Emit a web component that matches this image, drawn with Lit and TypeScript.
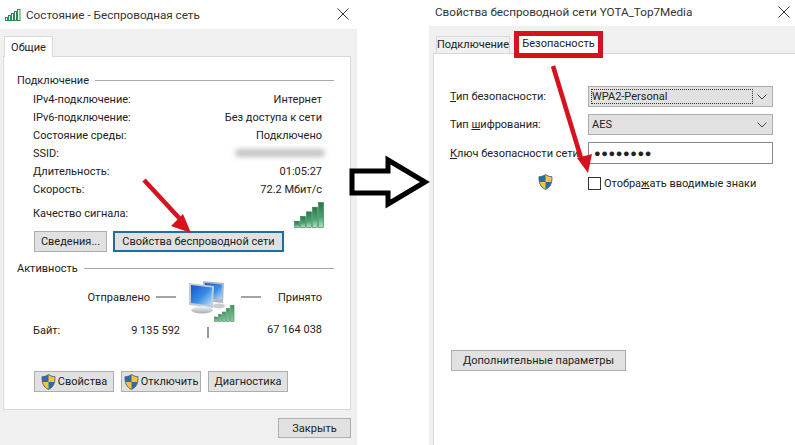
import { LitElement, html, css, svg } from "lit";
import { customElement } from "lit/decorators.js";

const closeIcon = html`<svg class="close" width="12" height="12" viewBox="0 0 12 12"><path d="M.5.5l11 11M11.5.5l-11 11" stroke="#333" fill="none"/></svg>`;

let shieldId = 0;
const shield = (size = 15) => {
  const id = `sh${shieldId++}`;
  return html`<svg class="shield" width=${size} height=${size + 1} viewBox="0 0 15 16">
    <defs><clipPath id=${id}><path d="M7.5.5C9.5 2 11.5 2.6 14 2.7c.3 6-1.5 10.5-6.5 12.8C2.5 13.2.7 8.7 1 2.7 3.5 2.6 5.5 2 7.5.5z"/></clipPath></defs>
    <g clip-path="url(#${id})">
      <rect width="15" height="16" fill="#2f6aa8"/>
      <rect x="7.5" width="8" height="8" fill="#f2c53d"/>
      <rect y="8" width="7.5" height="8" fill="#f2c53d"/>
    </g>
    <path d="M7.5.5C9.5 2 11.5 2.6 14 2.7c.3 6-1.5 10.5-6.5 12.8C2.5 13.2.7 8.7 1 2.7 3.5 2.6 5.5 2 7.5.5z" fill="none" stroke="#3f5f7f" stroke-width=".8"/>
  </svg>`;
};

// five rising bars, dark at the top and mint at the foot
const bars = (w: number, h: number, id: string) => {
  const step = w / 5;
  return html`<svg class="bars" width=${w} height=${h} viewBox="0 0 ${w} ${h}">
    <defs><linearGradient id=${id} x1="0" y1="0" x2="0" y2="1">
      <stop offset="0" stop-color="#27784a"/><stop offset=".6" stop-color="#4aa570"/><stop offset="1" stop-color="#b4e2c8"/>
    </linearGradient></defs>
    ${[0, 1, 2, 3, 4].map((i) => {
      const bh = h * (0.28 + i * 0.18);
      return svg`<rect x=${i * step + 0.5} y=${h - bh + 0.5} width=${step - 1} height=${bh - 1} fill="url(#${id})" stroke="#2c7a4c" stroke-width=".6"/>`;
    })}
  </svg>`;
};

const titleBars = html`<svg width="16" height="12" viewBox="0 0 16 12" fill="#fff" stroke="#2c8a50">
  <rect x=".5" y="8.5" width="2" height="3"/><rect x="3.5" y="6.5" width="2" height="5"/><rect x="6.5" y="4.5" width="2" height="7"/><rect x="9.5" y="2.5" width="2" height="9"/><rect x="12.5" y=".5" width="2.5" height="11"/>
</svg>`;

const computers = html`<svg class="pc" width="48" height="42" viewBox="0 0 48 42">
  <defs>
    <linearGradient id="scr" x1="0" y1="0" x2="1" y2="1"><stop offset="0" stop-color="#0f56c8"/><stop offset=".55" stop-color="#3a8fe8"/><stop offset="1" stop-color="#bfe0f8"/></linearGradient>
    <linearGradient id="stand" x1="0" y1="0" x2="0" y2="1"><stop offset="0" stop-color="#f2f2f2"/><stop offset="1" stop-color="#a8aeb0"/></linearGradient>
    <linearGradient id="mini" x1="0" y1="0" x2="0" y2="1"><stop offset="0" stop-color="#3d9a60"/><stop offset="1" stop-color="#8fcba6"/></linearGradient>
  </defs>
  <path d="M15 1l21 2-1 20-20-2z" fill="#aeb9c6"/>
  <path d="M17 3l17 1.5-.5 15-16.5-1.5z" fill="url(#scr)"/>
  <ellipse cx="31" cy="26" rx="6" ry="2.5" fill="#c8cdd0"/>
  <path d="M1 3l25 3-1 22-24-3z" fill="#c3ccd6"/>
  <path d="M3 5l21 2.5-1 18-20-2.5z" fill="url(#scr)"/>
  <path d="M10 26h9v3h-9z" fill="url(#stand)"/>
  <ellipse cx="14" cy="30" rx="11" ry="3.5" fill="url(#stand)"/>
  <g transform="translate(26 25)" fill="url(#mini)" stroke="#2c7a46" stroke-width=".5">
    <rect x=".5" y="12" width="3" height="4.5"/><rect x="4.5" y="9.5" width="3" height="7"/><rect x="8.5" y="7" width="3" height="9.5"/><rect x="12.5" y="3.5" width="3" height="13"/><rect x="16.5" y=".5" width="3.5" height="16"/>
  </g>
</svg>`;

const chevron = html`<svg class="chev" width="10" height="6" viewBox="0 0 10 6"><path d="M.5.5l4.5 4.5 4.5-4.5" stroke="#444" fill="none"/></svg>`;

@customElement("status-window")
class StatusWindow extends LitElement {
  static styles = css`
    :host { display: flex; flex-direction: column; width: 357px; height: 445px; flex: none; }
    .title { height: 29px; display: flex; align-items: center; gap: 5px; padding: 0 8px 0 5px; font-size: 11.7px; color: #333; flex: none; }
    .title span { flex: 1; }
    .close { margin-top: -2px; }
    .body { flex: 1; background: #f0f0f0; padding: 7px 6px 0 3px; display: flex; flex-direction: column; }
    .tab { width: 49px; height: 21px; margin-left: 1px; box-sizing: border-box; background: #fff; border: 1px solid #d9d9d9; border-bottom: none; display: flex; align-items: center; justify-content: center; margin-bottom: -1px; position: relative; z-index: 1; }
    .panel { box-sizing: border-box; background: #fff; border: 1px solid #d9d9d9; height: 354px; padding: 15px 16px 0 13px; }
    .head { height: 16px; display: flex; align-items: center; gap: 6px; }
    .head i { flex: 1; height: 1px; background: #a8a8a8; }
    .inner { padding: 0 12px 0 16px; }
    .rows { margin-top: 2px; }
    .row { height: 18px; display: flex; align-items: center; justify-content: space-between; }
    .blur { width: 90px; height: 8px; border-radius: 4px; background: #c4c4c4; filter: blur(2.5px); margin-right: -3px; }
    .signal { height: 30px; margin-right: -2px; }
    .signal .bars { margin-top: 4px; }
    .btns { display: flex; gap: 6px; margin: 3px 0 0 1px; }
    .acts { gap: 7px; margin-top: 33px; }
    button { font: inherit; color: #222; height: 21px; box-sizing: border-box; background: #e1e1e1; border: 1px solid #adadad; padding: 0; display: flex; align-items: center; justify-content: center; gap: 2px; }
    .details { width: 73px; }
    .props { width: 171px; border: 2px solid #1c6f9f; }
    .acts button { width: 80px; }
    .acts2 { margin-top: 8px; }
    .grid { display: grid; grid-template-columns: 147px 61px 81px; grid-template-rows: 42px 16px; margin-top: 4px; }
    .sent { display: flex; justify-content: flex-end; align-items: center; gap: 6px; padding: 0 4px 8px 0; }
    .dash { width: 20px; height: 2px; background: #a3a3a3; flex: none; }
    .pc { margin-left: 8px; }
    .recv { display: flex; justify-content: space-between; align-items: center; padding-bottom: 8px; }
    .bytes { display: flex; justify-content: space-between; align-items: center; }
    .sep { width: 2px; height: 11px; background: #999; margin: 5px 0 0 27px; }
    .val { text-align: right; line-height: 16px; }
    .closebtn { width: 73px; height: 20px; align-self: flex-end; margin-top: 8px; }
  `;

  render() {
    return html`
      <div class="title">${titleBars}<span>Состояние - Беспроводная сеть</span>${closeIcon}</div>
      <div class="body">
        <div class="tab">Общие</div>
        <div class="panel">
          <div class="head">Подключение<i></i></div>
          <div class="inner">
            <div class="rows">
              <div class="row"><span>IPv4-подключение:</span><span>Интернет</span></div>
              <div class="row"><span>IPv6-подключение:</span><span>Без доступа к сети</span></div>
              <div class="row"><span>Состояние среды:</span><span>Подключено</span></div>
              <div class="row"><span>SSID:</span><div class="blur"></div></div>
              <div class="row"><span>Длительность:</span><span>01:05:27</span></div>
              <div class="row"><span>Скорость:</span><span>72.2 Мбит/с</span></div>
              <div class="row signal"><span>Качество сигнала:</span>${bars(30, 26, "sig")}</div>
            </div>
            <div class="btns"><button class="details">Сведения...</button><button class="props">Свойства беспроводной сети</button></div>
          </div>
          <div class="head acts2">Активность<i></i></div>
          <div class="inner">
            <div class="grid">
              <div class="sent">Отправлено<span class="dash"></span></div>
              <div>${computers}</div>
              <div class="recv"><span class="dash"></span>Принято</div>
              <div class="bytes"><span>Байт:</span><span>9 135 592</span></div>
              <div><div class="sep"></div></div>
              <div class="val">67 164 038</div>
            </div>
            <div class="btns acts">
              <button>${shield()}Свойства</button>
              <button>${shield()}Отключить</button>
              <button>Диагностика</button>
            </div>
          </div>
        </div>
        <button class="closebtn">Закрыть</button>
      </div>
    `;
  }
}

@customElement("security-window")
class SecurityWindow extends LitElement {
  static styles = css`
    :host { display: flex; flex-direction: column; flex: 1; margin-left: 72px; min-width: 0; }
    .title { height: 26px; display: flex; align-items: center; justify-content: space-between; padding: 0 5px 3px 6px; box-sizing: border-box; font-size: 11.7px; color: #333; flex: none; }
    .body { flex: 1; background: #f0f0f0; padding: 10px 0 0 4px; display: flex; flex-direction: column; }
    .tabs { display: flex; height: 17px; padding-left: 3px; align-items: flex-end; }
    .tab { height: 17px; border: 1px solid #d9d9d9; border-bottom: none; box-sizing: border-box; display: flex; align-items: center; width: 74px; justify-content: center; padding-bottom: 1px; }
    .tab.on { position: relative; width: 79px; background: #fff; border: none; margin-left: 9px; outline: 5px solid #d5121e; z-index: 1; padding-bottom: 3px; }
    .panel { flex: 1; background: #fff; border-left: 1px solid #d9d9d9; border-top: 1px solid #d9d9d9; padding: 32px 22px 0 16px; display: flex; flex-direction: column; }
    .form { display: grid; grid-template-columns: 138px 185px; row-gap: 7px; align-items: center; }
    .select { position: relative; height: 21px; box-sizing: border-box; background: #e1e1e1; border: 1px solid #adadad; display: flex; align-items: center; justify-content: space-between; padding: 0 5px 0 3px; }
    .focus { position: absolute; left: 2px; top: 2px; bottom: 2px; right: 19px; border: 1px dotted #333; pointer-events: none; }
    .input { height: 22px; box-sizing: border-box; border: 1px solid #8a8a8a; background: #fff; display: flex; align-items: center; padding-left: 5px; font-size: 11px; letter-spacing: .6px; }
    .show { display: flex; align-items: center; margin-top: 12px; height: 14px; }
    .sh { width: 138px; display: flex; padding-left: 88px; box-sizing: border-box; margin-top: -2px; }
    .check { width: 13px; height: 13px; box-sizing: border-box; border: 1px solid #333; background: #fff; margin-right: 3px; }
    button { font: inherit; color: #222; width: 175px; height: 21px; background: #e1e1e1; border: 1px solid #adadad; padding: 0; margin: 160px 0 0 1px; }
  `;

  render() {
    return html`
      <div class="title"><span>Свойства беспроводной сети YOTA_Top7Media</span>${closeIcon}</div>
      <div class="body">
        <div class="tabs"><div class="tab">Подключение</div><div class="tab on">Безопасность</div></div>
        <div class="panel">
          <div class="form">
            <span><u>Т</u>ип безопасности:</span>
            <div class="select">WPA2-Personal${chevron}<span class="focus"></span></div>
            <span>Тип <u>ш</u>ифрования:</span>
            <div class="select">AES${chevron}</div>
            <span><u>К</u>люч безопасности сети</span>
            <div class="input">●●●●●●●●</div>
          </div>
          <div class="show">
            <div class="sh">${shield()}</div>
            <div class="check"></div>
            <span>Отобра<u>ж</u>ать вводимые знаки</span>
          </div>
          <button>Дополнительные параметры</button>
        </div>
      </div>
    `;
  }
}

@customElement("app-root")
export class AppRoot extends LitElement {
  static styles = css`
    :host { display: block; position: relative; width: 795px; height: 445px; overflow: hidden; background: #fff; font: 11px Roboto, "Noto Sans", sans-serif; color: #222; }
    .wrap { display: flex; height: 100%; }
    .marks { position: absolute; inset: 0; pointer-events: none; }
  `;

  render() {
    return html`
      <div class="wrap"><status-window></status-window><security-window></security-window></div>
      <svg class="marks" width="795" height="445" viewBox="0 0 795 445">
        <path d="M352 171h36v-11l37 22-37 22v-11h-36z" fill="#fff" stroke="#000" stroke-width="5"/>
        <path d="M144 180l37 40" stroke="#d5121e" stroke-width="4.5" fill="none"/>
        <path d="M191 233l-20-7 12-12z" fill="#d5121e"/>
        <path d="M553 66l28 92" stroke="#d5121e" stroke-width="4.5" fill="none"/>
        <path d="M588 173l-11-15 15-4z" fill="#d5121e"/>
      </svg>
    `;
  }
}
